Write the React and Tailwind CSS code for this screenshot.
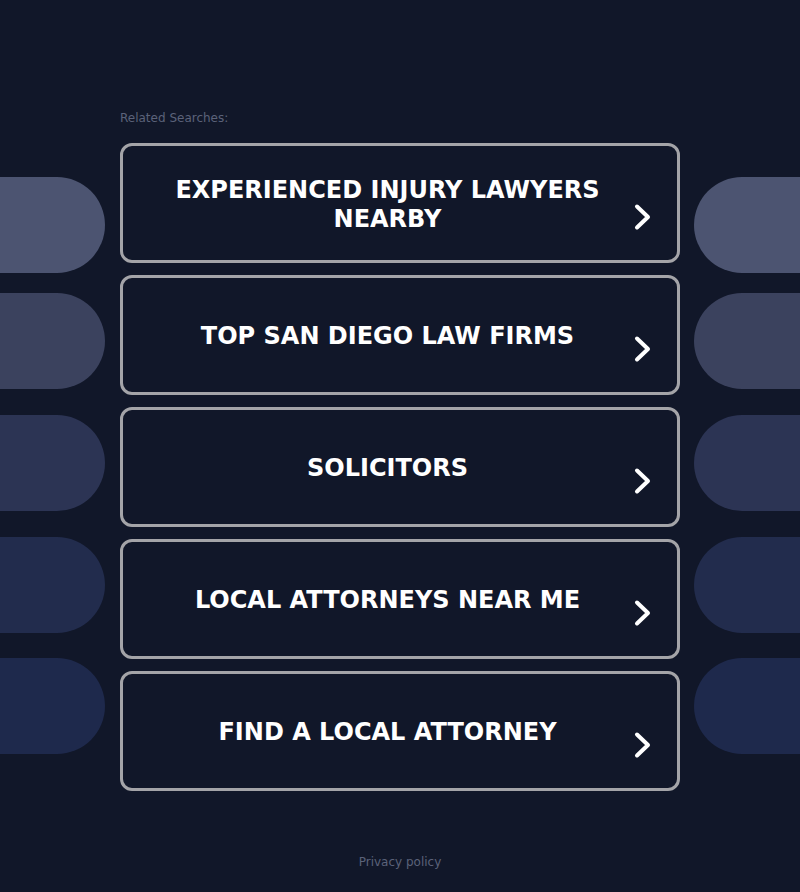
const searches = [
    'EXPERIENCED INJURY LAWYERS NEARBY',
    'TOP SAN DIEGO LAW FIRMS',
    'SOLICITORS',
    'LOCAL ATTORNEYS NEAR ME',
    'FIND A LOCAL ATTORNEY',
];

function Chevron() {
    return (
        <svg width="18" height="28" viewBox="0 0 18 28" className="mt-[27px] shrink-0">
            <path d="M3 3.5 L14 14 L3 24.5" fill="none" stroke="#ffffff" strokeWidth="4" strokeLinecap="round" strokeLinejoin="round" />
        </svg>
    );
}

function SearchCard({ label }) {
    return (
        <a
            href="#"
            className="flex h-[120px] items-center rounded-[12px] border-[3px] border-[#a4a4a8] pl-[18px] pr-[25px] text-white"
        >
            <span className="mt-[3px] flex-1 px-2 text-center text-[24px] font-bold leading-[29px]">
                {label}
            </span>
            <Chevron />
        </a>
    );
}

export default function App() {
    return (
        <div
            className="flex min-h-[892px] w-full flex-col bg-[#111729]"
            style={{ fontFamily: '"DejaVu Sans", sans-serif' }}
        >
            <div className="flex flex-1">
                {/* left decoration */}
                <div className="flex w-[105px] shrink-0 flex-col pt-[177px]">
                    <div className="h-24 rounded-r-full bg-[#4c5471]" />
                    <div className="mt-5 h-24 rounded-r-full bg-[#3b425e]" />
                    <div className="mt-[26px] h-24 rounded-r-full bg-[#2c3454]" />
                    <div className="mt-[26px] h-24 rounded-r-full bg-[#222c4d]" />
                    <div className="mt-[25px] h-24 rounded-r-full bg-[#1e294c]" />
                </div>

                <div className="ml-[15px] flex w-[560px] shrink-0 flex-col pt-[111px]">
                    <p className="mb-[18px] text-[12px] leading-[14px] text-[#5b6279]">Related Searches:</p>
                    <div className="flex flex-col gap-3">
                        {searches.map((s) => (
                            <SearchCard key={s} label={s} />
                        ))}
                    </div>
                </div>

                {/* right decoration */}
                <div className="ml-[14px] flex flex-1 flex-col pt-[177px]">
                    <div className="h-24 rounded-l-full bg-[#4c5471]" />
                    <div className="mt-5 h-24 rounded-l-full bg-[#3b425e]" />
                    <div className="mt-[26px] h-24 rounded-l-full bg-[#2c3454]" />
                    <div className="mt-[26px] h-24 rounded-l-full bg-[#222c4d]" />
                    <div className="mt-[25px] h-24 rounded-l-full bg-[#1e294c]" />
                </div>
            </div>

            <footer className="pb-[23px] text-center text-[12px] leading-[14px] text-[#5b6279]">
                <a href="#">Privacy policy</a>
            </footer>
        </div>
    );
}
